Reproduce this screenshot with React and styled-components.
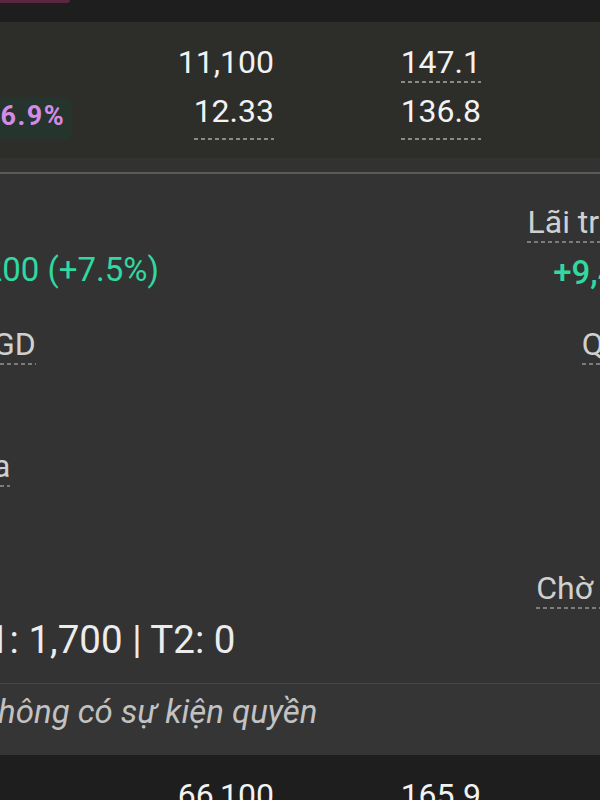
import styled, { createGlobalStyle } from "styled-components";

const GlobalStyle = createGlobalStyle`
  html, body {
    margin: 0;
    padding: 0;
    background: #333333;
  }
  body {
    font-family: Roboto, "Noto Sans", "Liberation Sans", sans-serif;
  }
`;

const COLS = "112px 202px 207px 1fr";

const Screen = styled.div`
  width: 600px;
  height: 800px;
  overflow: hidden;
  background: #333333;
`;

const Sheet = styled.div`
  width: 730px;
  margin-left: -40px;
  display: flex;
  flex-direction: column;
`;

const TailRow = styled.div`
  display: grid;
  grid-template-columns: ${COLS};
  height: 22px;
  background: #1e1e1e;
`;

const BadgeTail = styled.div`
  justify-self: end;
  width: 100px;
  height: 3px;
  margin-right: 2px;
  border-bottom-right-radius: 6px;
  background: #5a2640;
`;

const StockRow = styled.div`
  display: grid;
  grid-template-columns: ${COLS};
  row-gap: 9px;
  padding: 21px 0 18px;
  background: ${(p) => (p.$active ? "#2d2d2a" : "#1e1e1e")};
`;

const Num = styled.div`
  justify-self: end;
  font-size: 32px;
  line-height: 38px;
  padding-bottom: 2px;
  color: #f2f2f2;
  background-image: ${(p) =>
    p.$dotted
      ? "linear-gradient(to right, #8a8a8a 58%, transparent 58%)"
      : "none"};
  background-size: 7px 2px;
  background-repeat: repeat-x;
  background-position: left bottom;
`;

const Badge = styled.span`
  justify-self: end;
  align-self: start;
  margin-top: 5px;
  padding: 0 7px 4px 8px;
  border-radius: 8px;
  background: #25352d;
  color: #d68ae8;
  font-size: 27px;
  font-weight: 700;
  letter-spacing: 1.4px;
  line-height: 39px;
`;

const Strip = styled.div`
  height: 14px;
  background: #323230;
`;

const Rule = styled.div`
  height: 2px;
  background: #5a5a5a;
`;

const Details = styled.div`
  display: grid;
  grid-template-columns: 1fr 1fr;
  row-gap: 36px;
  padding: 29px 36px 20px 5px;
  background: #333333;
`;

const Field = styled.div`
  display: flex;
  flex-direction: column;
  align-items: ${(p) => (p.$right ? "flex-end" : "flex-start")};
  gap: 8px;
`;

const Label = styled.span`
  font-size: 32px;
  line-height: 38px;
  padding-bottom: 2px;
  color: #d0d0d0;
  white-space: nowrap;
  background-image: linear-gradient(to right, #7c7c7c 58%, transparent 58%);
  background-size: 7px 2px;
  background-repeat: repeat-x;
  background-position: left bottom;
`;

const sizes = {
  md: { font: "33px", line: "38px", top: "0" },
  strong: { font: "33px", line: "33px", top: "5px" },
  lg: { font: "38.5px", line: "46px", top: "0" },
};

const Value = styled.span`
  white-space: nowrap;
  color: ${(p) => (p.$tone === "up" ? "#30d9a0" : "#ececec")};
  font-size: ${(p) => sizes[p.$size].font};
  line-height: ${(p) => sizes[p.$size].line};
  padding-top: ${(p) => sizes[p.$size].top};
  font-weight: ${(p) => (p.$size === "strong" ? 500 : 400)};
`;

const Divider = styled.div`
  height: 1px;
  background: #474747;
`;

const EventRow = styled.div`
  padding: 8px 0 23px 18px;
  background: #353535;
  color: #c2c2c2;
  font-size: 33px;
  font-style: italic;
  line-height: 40px;
  white-space: nowrap;
`;

const fields = [
  { label: "±", value: "+200 (+7.5%)", tone: "up" },
  { label: "Lãi trước", value: "+9,450", tone: "up", size: "strong", right: true },
  { label: "MGD", value: "0" },
  { label: "Q. lời", value: "0", right: true },
  { label: "Ma", value: "0" },
  { label: "SL", value: "0", right: true },
  { label: "Σ", value: "T1: 1,700 | T2: 0", size: "lg" },
  { label: "Chờ bán", value: "0", right: true },
];

export default function App() {
  return (
    <Screen>
      <GlobalStyle />
      <Sheet>
        <TailRow>
          <BadgeTail />
        </TailRow>

        <StockRow $active>
          <span />
          <Num>11,100</Num>
          <Num $dotted>147.1</Num>
          <span />
          <Badge>+6.9%</Badge>
          <Num $dotted>12.33</Num>
          <Num $dotted>136.8</Num>
          <span />
        </StockRow>

        <Strip />
        <Rule />

        <Details>
          {fields.map((f) => (
            <Field key={f.label} $right={f.right}>
              <Label>{f.label}</Label>
              <Value $tone={f.tone} $size={f.size || "md"}>
                {f.value}
              </Value>
            </Field>
          ))}
        </Details>

        <Divider />
        <EventRow>Không có sự kiện quyền</EventRow>

        <StockRow>
          <span />
          <Num>66,100</Num>
          <Num $dotted>165.9</Num>
          <span />
        </StockRow>
      </Sheet>
    </Screen>
  );
}
